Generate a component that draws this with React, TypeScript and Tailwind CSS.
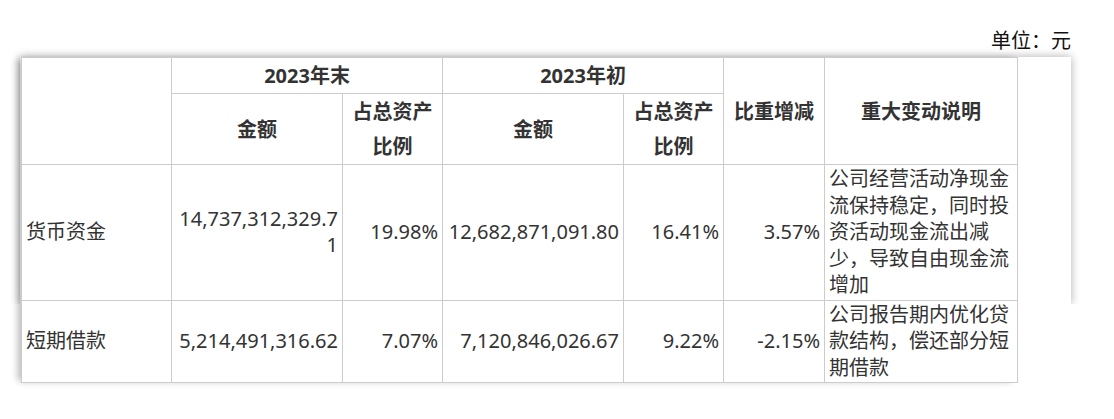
const rows = [
  {
    name: "货币资金",
    endAmount: "14,737,312,329.71",
    endRatio: "19.98%",
    startAmount: "12,682,871,091.80",
    startRatio: "16.41%",
    change: "3.57%",
    note: "公司经营活动净现金流保持稳定，同时投资活动现金流出减少，导致自由现金流增加",
  },
  {
    name: "短期借款",
    endAmount: "5,214,491,316.62",
    endRatio: "7.07%",
    startAmount: "7,120,846,026.67",
    startRatio: "9.22%",
    change: "-2.15%",
    note: "公司报告期内优化贷款结构，偿还部分短期借款",
  },
];

export default function App() {
  const th = "border border-[#cccccc] px-1 text-center font-bold leading-[35px] align-middle";
  const td = "border border-[#cccccc] px-1 py-px leading-[26.5px] align-middle";

  return (
    <div className="min-h-[419px] bg-white font-['Noto_Sans','Noto_Sans_CJK_SC',sans-serif] text-[20px] text-[#333333]">
      <div className="ml-[20px] w-[1051px] pt-[28px]">
        {/* Unit */}
        <div className="mb-[3px] text-right leading-[26px] text-[#111111]">单位：元</div>

        {/* Panel: shadow cut off at the bottom edge */}
        <div className="relative h-[247px] bg-white before:pointer-events-none before:absolute before:inset-0 before:shadow-[0_0_9px_rgba(0,0,0,0.32)] before:content-[''] before:[clip-path:inset(-20px_-20px_0_-20px)]">
          <table className="relative ml-px w-[997px] table-fixed border-collapse bg-white shadow-[-5px_0_7px_-2px_rgba(0,0,0,0.28)]">
            <colgroup>
              <col className="w-[150px]" />
              <col className="w-[171px]" />
              <col className="w-[100px]" />
              <col className="w-[181px]" />
              <col className="w-[100px]" />
              <col className="w-[101px]" />
              <col className="w-[193px]" />
            </colgroup>
            <thead>
              <tr>
                <th rowSpan={2} className={th}></th>
                <th colSpan={2} className={th}>2023年末</th>
                <th colSpan={2} className={th}>2023年初</th>
                <th rowSpan={2} className={th}>比重增减</th>
                <th rowSpan={2} className={th}>重大变动说明</th>
              </tr>
              <tr>
                <th className={th}>金额</th>
                <th className={th}>占总资产比例</th>
                <th className={th}>金额</th>
                <th className={th}>占总资产比例</th>
              </tr>
            </thead>
            <tbody>
              {rows.map((r) => (
                <tr key={r.name}>
                  <td className={td}>{r.name}</td>
                  <td className={`${td} break-all text-right`}>{r.endAmount}</td>
                  <td className={`${td} text-right`}>{r.endRatio}</td>
                  <td className={`${td} break-all text-right`}>{r.startAmount}</td>
                  <td className={`${td} text-right`}>{r.startRatio}</td>
                  <td className={`${td} text-right`}>{r.change}</td>
                  <td className={td}>{r.note}</td>
                </tr>
              ))}
            </tbody>
          </table>
        </div>
      </div>
    </div>
  );
}
